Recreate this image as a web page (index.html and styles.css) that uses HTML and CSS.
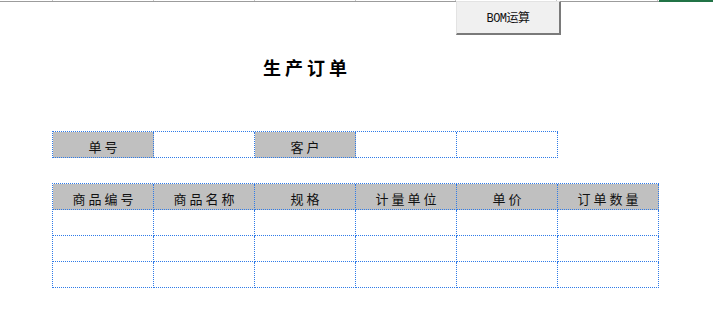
FILE: index.html
```html
<!DOCTYPE html>
<html lang="zh-CN">
<head>
<meta charset="utf-8">
<title>生产订单</title>
<link rel="stylesheet" href="styles.css">
</head>
<body>
<div class="sheet">
  <div class="colbar">
    <div class="colbar-cell first"></div>
    <div class="colbar-cell"></div>
    <div class="colbar-cell"></div>
    <div class="colbar-cell"></div>
    <div class="colbar-cell"></div>
    <div class="colbar-cell"></div>
    <div class="colbar-cell"></div>
    <div class="colbar-sel"></div>
  </div>

  <button class="bom-btn" type="button">BOM运算</button>

  <div class="title">生产订单</div>

  <div class="grid info">
    <div class="cell head">单号</div>
    <div class="cell"></div>
    <div class="cell head">客户</div>
    <div class="cell"></div>
    <div class="cell"></div>
  </div>

  <div class="grid items">
    <div class="cell head">商品编号</div>
    <div class="cell head">商品名称</div>
    <div class="cell head">规格</div>
    <div class="cell head">计量单位</div>
    <div class="cell head">单价</div>
    <div class="cell head">订单数量</div>

    <div class="cell"></div><div class="cell"></div><div class="cell"></div>
    <div class="cell"></div><div class="cell"></div><div class="cell"></div>

    <div class="cell"></div><div class="cell"></div><div class="cell"></div>
    <div class="cell"></div><div class="cell"></div><div class="cell"></div>

    <div class="cell"></div><div class="cell"></div><div class="cell"></div>
    <div class="cell"></div><div class="cell"></div><div class="cell"></div>
  </div>
</div>
</body>
</html>
```

FILE: styles.css
```css
* { box-sizing: border-box; }

html, body {
  margin: 0;
  padding: 0;
  background: #ffffff;
}

body {
  width: 713px;
  height: 335px;
  overflow: hidden;
  font-family: "Noto Sans CJK SC", "Liberation Serif", sans-serif;
  color: #111;
}

.sheet {
  position: relative;
  width: 713px;
  height: 335px;
}

/* remains of the column header strip at the very top */
.colbar {
  display: flex;
  height: 2px;
  border-bottom: 1px solid #9c9c9c;
}

.colbar-cell {
  width: 101px;
  height: 1px;
  border-right: 1px solid #c6c6c6;
}

.colbar-cell.first {
  width: 53px;
}

.colbar-sel {
  width: 54px;
  height: 2px;
  margin-left: 1px;
  background: #217346;
}

/* floating form button */
.bom-btn {
  position: absolute;
  left: 456px;
  top: 1px;
  width: 105px;
  height: 34px;
  margin: 0;
  padding: 0 0 1px 0;
  background: #f0f0f0;
  border-style: solid;
  border-width: 1px 2px 2px 1px;
  border-color: #e3e3e3 #7a7a7a #7a7a7a #e3e3e3;
  font-family: "Liberation Mono", "Noto Sans CJK SC", monospace;
  font-size: 12px;
  color: #111;
  letter-spacing: -0.5px;
}

.title {
  width: 506px;
  margin: 53px 0 0 52px;
  height: 24px;
  line-height: 24px;
  text-align: center;
  padding-left: 4px;
  font-size: 18px;
  font-weight: 700;
  letter-spacing: 4px;
  color: #000;
}

.grid {
  display: grid;
  margin-left: 52px;
  border-left: 1px dotted #2f7be8;
  border-top: 1px dotted #2f7be8;
}

.info {
  grid-template-columns: repeat(5, 101px);
  width: 506px;
  margin-top: 52px;
}

.items {
  grid-template-columns: repeat(6, 101px);
  width: 607px;
  margin-top: 25px;
}

.cell {
  height: 26px;
  border-right: 1px dotted #2f7be8;
  border-bottom: 1px dotted #2f7be8;
  background: #ffffff;
}

.cell.head {
  background: #c0c0c0;
  display: flex;
  align-items: center;
  justify-content: center;
  padding: 3px 0 0 3px;
  font-size: 13px;
  letter-spacing: 3px;
  color: #111;
}
```
